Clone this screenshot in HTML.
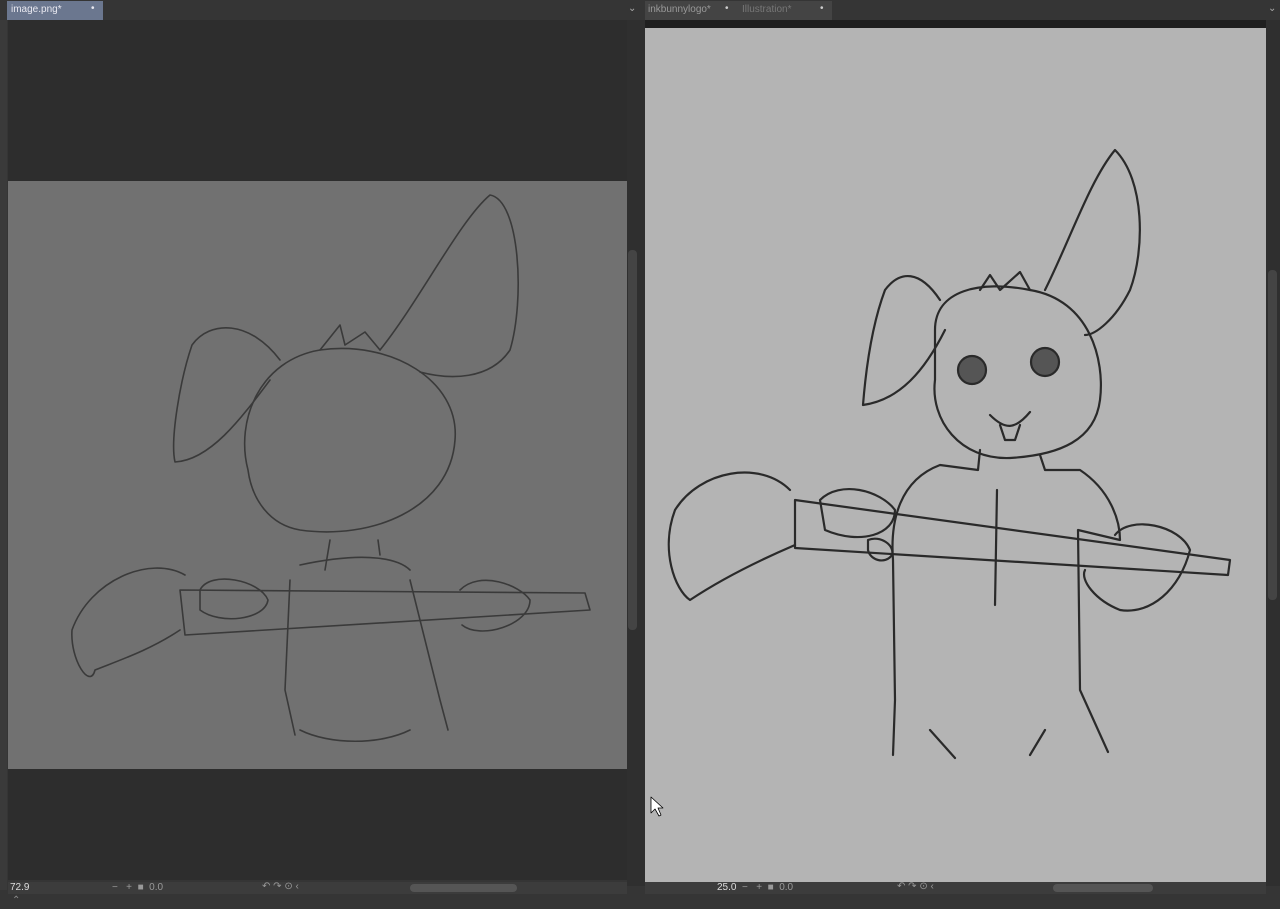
<!DOCTYPE html>
<html><head><style>
body{margin:0;width:1280px;height:909px;background:#353535;position:relative;overflow:hidden;font-family:"Liberation Sans",sans-serif;font-size:10px;color:#ddd}
div{position:absolute;box-sizing:border-box}
</style></head><body>
<div style="left:0;top:0;width:1280px;height:20px;background:#353535"></div>
<div style="left:7px;top:1px;width:96px;height:19px;background:#6b778f;color:#e8e8f0;padding:3px 4px">image.png*<span style="position:absolute;left:84px;top:2px">•</span></div>
<div style="left:628px;top:3px;color:#aaa">⌄</div>
<div style="left:645px;top:1px;width:187px;height:19px;background:#444;color:#999;padding:3px 3px">inkbunnylogo*<span style="position:absolute;left:80px;top:2px;color:#ccc">•</span><span style="position:absolute;left:97px;top:3px;color:#777">Illustration*</span><span style="position:absolute;left:175px;top:2px;color:#ccc">•</span></div>
<div style="left:1268px;top:3px;color:#aaa">⌄</div>
<!-- left panel -->
<div style="left:0;top:20px;width:7px;height:870px;background:#3a3a3a"></div>
<div style="left:8px;top:20px;width:619px;height:860px;background:#2d2d2d"></div>
<div style="left:8px;top:181px;width:619px;height:588px;background:#717171"></div>
<div style="left:627px;top:20px;width:11px;height:866px;background:#2f2f2f"></div>
<div style="left:628px;top:250px;width:9px;height:380px;background:#444;border-radius:4px"></div>
<!-- right panel -->
<div style="left:638px;top:20px;width:7px;height:866px;background:#2f2f2f"></div>
<div style="left:645px;top:20px;width:621px;height:8px;background:#1f1f1f"></div>
<div style="left:645px;top:28px;width:621px;height:854px;background:#b4b4b4"></div>
<div style="left:1266px;top:20px;width:14px;height:866px;background:#2f2f2f"></div>
<div style="left:1268px;top:270px;width:9px;height:330px;background:#444;border-radius:4px"></div>
<!-- bottom bars -->
<div style="left:8px;top:882px;width:619px;height:12px;background:#3c3c3c"></div>
<div style="left:10px;top:882px;color:#ddd">72.9</div>
<div style="left:112px;top:882px;color:#999">−&nbsp;&nbsp;&nbsp;+&nbsp;&nbsp;■&nbsp;&nbsp;0.0</div>
<div style="left:262px;top:881px;color:#999">↶ ↷ ⊙ ‹</div>
<div style="left:410px;top:884px;width:107px;height:8px;background:#555;border-radius:4px"></div>
<div style="left:645px;top:882px;width:621px;height:12px;background:#3c3c3c"></div>
<div style="left:717px;top:882px;color:#ddd">25.0&nbsp;&nbsp;<span style="color:#999">−&nbsp;&nbsp;&nbsp;+&nbsp;&nbsp;■&nbsp;&nbsp;0.0</span></div>
<div style="left:897px;top:881px;color:#999">↶ ↷ ⊙ ‹</div>
<div style="left:1053px;top:884px;width:100px;height:8px;background:#555;border-radius:4px"></div>
<div style="left:12px;top:895px;color:#888">⌃</div>
<!-- sketches -->
<svg style="position:absolute;left:0;top:0" width="1280" height="909" fill="none" stroke-linecap="round" stroke-linejoin="round">
<g stroke="#3a3a3a" stroke-width="1.6">
<path d="M248,470 C235,420 260,360 320,350 C390,340 460,380 455,440 C450,510 370,540 300,530 C270,525 252,500 248,470"/>
<path d="M280,360 C250,320 210,320 192,345 C180,380 170,440 175,462 C210,460 240,420 270,380"/>
<path d="M380,350 C420,300 460,220 490,195 C520,200 525,300 510,350 C490,380 450,380 420,372"/>
<path d="M320,350 L340,325 L345,345 L365,332 L380,350"/>
<path d="M330,540 L325,570 M378,540 L380,555"/>
<path d="M180,590 L585,593 L590,610 L185,635 Z"/>
<path d="M185,575 C150,555 90,580 72,630 C70,660 90,690 95,670 C120,660 150,650 180,630"/>
<path d="M200,590 C210,570 260,580 268,600 C265,620 220,625 200,610 Z"/>
<path d="M460,590 C480,570 520,585 530,600 C530,625 480,640 462,625"/>
<path d="M300,565 C370,550 400,560 410,570 M290,580 L285,690 L295,735 M410,580 L440,700 L448,730 M300,730 C330,745 380,745 410,730"/>
</g>
<g stroke="#2a2a2a" stroke-width="2.2">
<path d="M935,330 C935,290 980,280 1030,290 C1090,300 1105,360 1100,400 C1095,440 1060,455 1010,458 C960,460 930,420 935,380 Z"/>
<path d="M940,300 C920,270 900,270 885,290 C870,330 865,380 863,405 C900,400 925,370 945,330"/>
<path d="M1045,290 C1070,240 1090,180 1115,150 C1145,180 1145,250 1130,290 C1115,320 1095,335 1085,335"/>
<path d="M980,290 L990,275 L1000,290 L1020,272 L1030,290"/>
<circle cx="972" cy="370" r="14" fill="#555"/><circle cx="1045" cy="362" r="14" fill="#555"/>
<path d="M990,415 C1005,430 1015,430 1030,412 M1000,425 L1005,440 L1015,440 L1020,425"/>
<path d="M980,450 L978,470 L940,465 C900,480 890,520 893,560 L895,700 L893,755 M1040,455 L1045,470 L1080,470 C1110,490 1120,520 1120,540 L1078,530 L1080,690 L1108,752"/>
<path d="M930,730 L955,758 M1045,730 L1030,755 M997,490 L995,605"/>
<path d="M795,500 L1230,560 L1228,575 L795,548 Z"/>
<path d="M790,490 C760,460 700,470 675,510 C660,550 675,590 690,600 C720,580 760,560 795,545"/>
<path d="M820,500 C840,480 880,490 895,510 C895,535 860,545 825,530 Z"/>
<path d="M868,540 C880,535 895,545 892,555 C885,565 870,560 868,550 Z"/>
<path d="M1115,535 C1130,515 1180,525 1190,550 C1180,590 1150,615 1120,610 C1095,600 1080,580 1085,570"/>
</g>
<path d="M651,797 L651,813 L655,809 L659,816 L661,815 L658,808 L663,808 Z" fill="#fff" stroke="#000" stroke-width="0.8"/>
</svg>
</body></html>
